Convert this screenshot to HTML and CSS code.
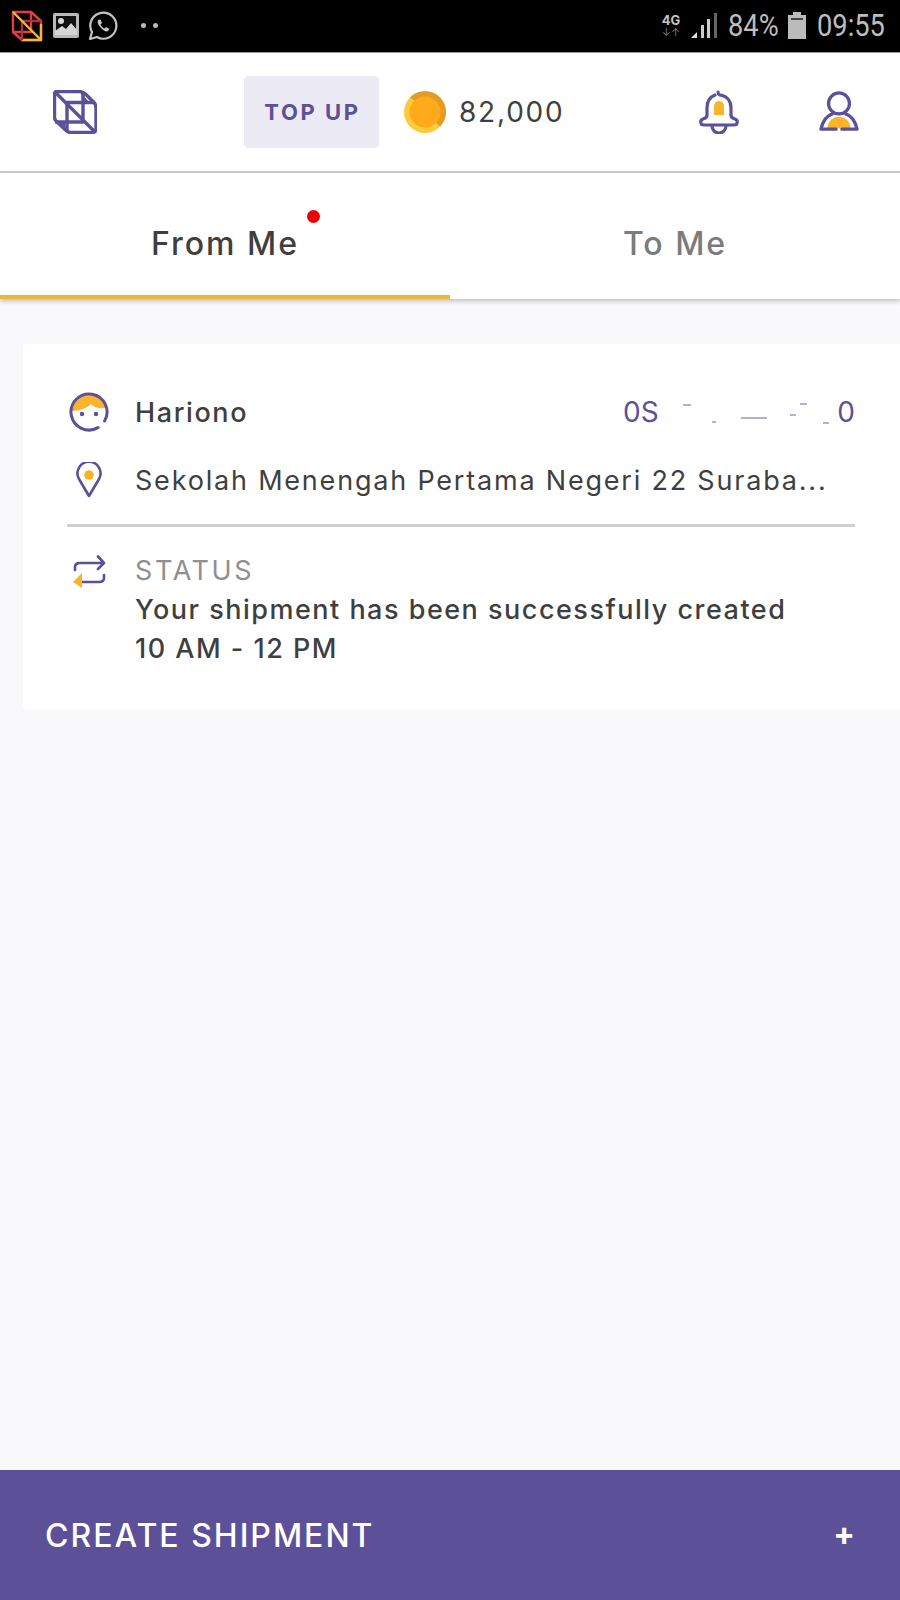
FILE: index.html
```html
<!DOCTYPE html>
<html lang="en">
<head>
  <meta charset="UTF-8" />
  <meta name="viewport" content="width=device-width, initial-scale=1.0"/>
  <title>Shipments</title>
  <link rel="stylesheet" href="styles.css">
</head>
<body>
  <div class="page">
    <!-- Status bar -->
    <div class="status-bar">
      <div class="status-left">
        <svg class="st-logo" width="34" height="32" viewBox="0 0 34 32" fill="none" stroke-width="2.4" stroke-linejoin="round">
          <path d="M3 2H21V22H3Z" stroke="#e23d4b"/>
          <path d="M21 2L31 11V30H12L3 22" stroke="#e23d4b"/>
          <path d="M31 14V30H12" stroke="#f2b63a"/>
          <path d="M12 11H31M12 11V30" stroke="#b0303c"/>
          <path d="M3 2L31 30" stroke="#f2b63a"/>
        </svg>
        <svg width="28" height="26" viewBox="0 0 28 26">
          <rect x="1" y="0" width="26" height="25" rx="2" fill="#b9b9b9"/>
          <rect x="4" y="3" width="20" height="15" fill="#111"/>
          <circle cx="9" cy="8" r="3" fill="#d6d6d6"/>
          <path d="M3 22V18L10 13L14 16L19 10L25 17V22Z" fill="#d6d6d6"/>
        </svg>
        <svg width="30" height="30" viewBox="0 0 30 30" fill="none">
          <path d="M2 28L4 21A13 13 0 1 1 9 26Z" stroke="#c4c4c4" stroke-width="2.2" stroke-linejoin="round"/>
          <path d="M10 9C9 11 10 14 13 17S18 21 20 20L21.500 18L18 16L16.500 17.500C15 17 13 15 12.500 13.500L14 12L12.500 8.500Z" fill="#c4c4c4"/>
        </svg>
        <div class="st-dots"><span></span><span></span></div>
      </div>
      <div class="status-right">
        <div class="st-net"><b>4G</b><small>↓↑</small></div>
        <svg class="st-signal" width="26" height="28" viewBox="0 0 26 28">
          <path d="M0 26L6 20V26Z" fill="#ddd"/>
          <rect x="10" y="13" width="3" height="13" fill="#ccc"/>
          <rect x="16" y="7" width="3" height="19" fill="#ccc"/>
          <rect x="23" y="1" width="3" height="25" fill="#666"/>
        </svg>
        <span class="st-text st-pct"><span>84%</span></span>
        <svg class="st-battery" width="18" height="28" viewBox="0 0 18 28">
          <path d="M5 0H13V3H18V27H0V3H5Z" fill="#bbb"/>
          <rect x="3" y="6" width="12" height="2" fill="#444"/>
        </svg>
        <span class="st-text st-time"><span>09:55</span></span>
      </div>
    </div>

    <!-- Header -->
    <header class="top-bar">
      <svg class="logo" width="44" height="44" viewBox="0 0 44 44" fill="none" stroke="#5c5099" stroke-width="3.4" stroke-linejoin="round">
        <path d="M3 1.500H26Q30 1.500 33 4.500L41 12.500Q43 14.500 43 18V39Q43 42.500 39 42.500H18Q15 42.500 12 39.500L3 31Q1.500 29 1.500 27V3Z"/>
        <path d="M30 3V32H2"/>
        <path d="M14 42V12.500H42"/>
        <path d="M2 2L42 42"/>
        <path d="M28 3L36 12H30Z M3 32H12L13 40Z" fill="#5c5099" stroke="none"/>
      </svg>
      <button class="topup-btn">TOP UP</button>
      <svg class="coin" width="42" height="42" viewBox="0 0 42 42">
        <circle cx="21" cy="21" r="21" fill="#fcca3d"/>
        <path d="M6 6.500A21 21 0 0 1 42 21A21 21 0 0 1 36 35.500L31 31A15 15 0 0 0 11 10Z" fill="#e49a26"/>
        <circle cx="21" cy="21" r="15.500" fill="#fdab1b"/>
      </svg>
      <span class="balance">82,000</span>
      <svg class="bell" width="40" height="44" viewBox="0 0 40 44" fill="none" stroke="#5c5099" stroke-width="3.2" stroke-linecap="round" stroke-linejoin="round">
        <path d="M15 17Q15 11 20 11Q25 11 25 17V25H15Z" fill="#fbb32a" stroke="none"/>
        <path d="M19 2Q19 4 21 5C28 6 32 11 32 18V25Q32 28 36 29Q39 30 38 33Q38 35 35 35H5Q2 35 2 33Q1 30 4 29Q8 28 8 25V18C8 11 11 7 16 5"/>
        <path d="M13 36A7 7 0 0 0 27 36"/>
      </svg>
      <svg class="person" width="40" height="42" viewBox="0 0 42 44" fill="none" stroke="#5c5099" stroke-width="3.4" stroke-linecap="round" stroke-linejoin="round">
        <path d="M9 39A12 12 0 0 1 33 39Z" fill="#fbb32a" stroke="none"/>
        <circle cx="21" cy="13" r="11"/>
        <path d="M14 24Q5 27 2 40H18M28 24Q37 27 40 40H24"/>
      </svg>
    </header>

    <!-- Tabs -->
    <nav class="tabs">
      <div class="tab active"><span class="tab-label">From Me<i class="tab-dot"></i></span></div>
      <div class="tab"><span class="tab-label">To Me</span></div>
    </nav>

    <!-- Shipment list -->
    <main class="list">
      <section class="card">
        <div class="row row-name">
          <svg class="row-icon" width="40" height="44" viewBox="0 0 40 44" fill="none">
            <path d="M2.500 21A18 18 0 0 1 37.500 17.500Q28 20 22 14Q15 21 2.500 21Z" fill="#fbb32a"/>
            <path d="M29 37.600A18 18 0 1 1 35.600 31" stroke="#5c5099" stroke-width="3" stroke-linecap="round"/>
            <circle cx="13" cy="24" r="2.200" fill="#5c5099"/>
            <circle cx="27" cy="24" r="2.200" fill="#5c5099"/>
          </svg>
          <span class="name">Hariono</span>
          <div class="phone">
            <span>0S</span>
            <i class="smudge s1"></i><i class="smudge s2"></i><i class="smudge s3"></i>
            <i class="smudge s4"></i><i class="smudge s5"></i><i class="smudge s6"></i>
            <span>0</span>
          </div>
        </div>
        <div class="row row-addr">
          <svg class="row-icon" width="40" height="36" viewBox="0 0 40 36" fill="none">
            <path d="M20 34L10 17A11.500 11.500 0 1 1 30 17Z" stroke="#5c5099" stroke-width="2.600" stroke-linejoin="round"/>
            <circle cx="20" cy="13" r="4.800" fill="#fbb32a"/>
          </svg>
          <span class="addr">Sekolah Menengah Pertama Negeri 22 Suraba...</span>
        </div>
        <div class="divider"></div>
        <div class="row row-status">
          <svg class="row-icon status-icon" width="40" height="36" viewBox="0 0 40 36" fill="none" stroke="#5c5099" stroke-width="2.600" stroke-linecap="round" stroke-linejoin="round">
            <path d="M6 15V12Q6 8 11 8H35M29 1.500L35 8L29 14"/>
            <path d="M35 20V23Q35 27 30 27H12"/>
            <path d="M13 18V33L4 27Z" fill="#fbb32a" stroke="none"/>
          </svg>
          <div class="status-text">
            <div class="status-label">STATUS</div>
            <div class="status-msg">Your shipment has been successfully created</div>
            <div class="status-msg">10 AM - 12 PM</div>
          </div>
        </div>
      </section>
    </main>

    <footer class="create-bar">
      <span>CREATE SHIPMENT</span>
      <span class="plus">+</span>
    </footer>
  </div>
</body>
</html>
```

FILE: styles.css
```css
* {
  box-sizing: border-box;
}
body {
  margin: 0;
  font-family: Inter, Lato, sans-serif;
  color: #3f3f3f;
  background-color: #f9f9fc;
}
.page {
  display: flex;
  flex-direction: column;
  height: 1600px;
  overflow: hidden;
}
.status-bar {
  display: flex;
  justify-content: space-between;
  align-items: center;
  height: 53px;
  padding: 0 15px 1px 10px;
  background-color: #000;
  border-bottom: 1px solid #999;
}
.status-left {
  display: flex;
  align-items: center;
  gap: 8px;
}
.st-dots {
  display: flex;
  gap: 7px;
  margin-left: 15px;
}
.st-dots span {
  width: 5px;
  height: 5px;
  border-radius: 50%;
  background-color: #bbb;
}
.status-right {
  display: flex;
  align-items: center;
}
.st-net {
  display: flex;
  flex-direction: column;
  align-items: center;
  width: 22px;
  color: #c4c4c4;
  line-height: 12px;
}
.st-net b {
  font-size: 13px;
}
.st-net small {
  font-size: 11px;
  color: #777;
}
.st-signal {
  margin-left: 9px;
}
.st-text {
  display: block;
  font-family: Roboto, sans-serif;
  font-size: 31px;
  color: #bdbdbd;
  white-space: nowrap;
}
.st-text span {
  display: inline-block;
  transform: scaleX(0.88);
  transform-origin: left center;
}
.st-pct {
  width: 50px;
  margin-left: 11px;
}
.st-battery {
  margin-left: 10px;
}
.st-time {
  width: 68px;
  margin-left: 11px;
}
.top-bar {
  display: flex;
  align-items: center;
  height: 120px;
  background-color: #fff;
  border-bottom: 2px solid #cfcfcf;
}
.logo {
  margin-left: 53px;
}
.topup-btn {
  width: 135px;
  height: 72px;
  margin-left: 147px;
  padding: 0 0 0 2px;
  border: none;
  border-radius: 4px;
  background-color: #eceaf4;
  color: #5c5099;
  font-family: inherit;
  font-size: 22px;
  font-weight: 700;
  letter-spacing: 2.6px;
}
.coin {
  margin-left: 25px;
}
.balance {
  margin-left: 13px;
  font-size: 28px;
  letter-spacing: 1.8px;
}
.bell {
  margin-left: auto;
}
.person {
  margin-left: 80px;
  margin-right: 41px;
}
.tabs {
  display: flex;
  height: 126px;
  background-color: #fff;
  box-shadow: 0 2px 5px rgba(0, 0, 0, 0.25);
}
.tab {
  flex: 1;
  display: flex;
  justify-content: center;
  align-items: center;
  padding-top: 14px;
  font-size: 32px;
  letter-spacing: 2px;
  color: #7b7b7b;
  font-weight: 500;
}
.tab.active {
  color: #3f3f3f;
  border-bottom: 4px solid #ecb92c;
  padding-top: 18px;
}
.tab-label {
  position: relative;
}
.tab-dot {
  position: absolute;
  top: -14px;
  right: -21px;
  width: 13px;
  height: 13px;
  border-radius: 50%;
  background-color: #f00000;
}
.list {
  flex: 1;
  padding: 45px 0 0 23px;
}
.card {
  height: 365px;
  padding: 43px 45px 0 44px;
  background-color: #fff;
}
.row {
  display: flex;
  align-items: center;
}
.row-icon {
  flex: none;
  margin-left: 2px;
  margin-right: 26px;
}
.row-name {
  height: 50px;
}
.name {
  font-size: 27px;
  font-weight: 500;
  letter-spacing: 1.6px;
}
.phone {
  position: relative;
  display: flex;
  justify-content: space-between;
  width: 232px;
  margin-left: auto;
  font-size: 28px;
  color: #5c5099;
}
.smudge {
  position: absolute;
  height: 2px;
  background-color: #5c5099;
  opacity: 0.45;
}
.s1 { left: 60px; top: 9px; width: 8px; }
.s2 { left: 89px; top: 26px; width: 4px; }
.s3 { left: 118px; top: 22px; width: 26px; }
.s4 { left: 167px; top: 19px; width: 6px; }
.s5 { left: 177px; top: 8px; width: 7px; }
.s6 { left: 200px; top: 27px; width: 6px; }
.row-addr {
  height: 36px;
  margin-top: 25px;
}
.addr {
  font-size: 27px;
  letter-spacing: 1.8px;
  white-space: nowrap;
}
.divider {
  height: 3px;
  margin-top: 26px;
  background-color: #cfcfcf;
}
.row-status {
  align-items: flex-start;
  margin-top: 24px;
}
.status-icon {
  margin-top: 4px;
}
.status-text {
  line-height: 39px;
  font-size: 27px;
}
.status-label {
  color: #8f8f8f;
  letter-spacing: 2.6px;
}
.status-msg {
  font-weight: 500;
  letter-spacing: 1.5px;
}
.create-bar {
  display: flex;
  justify-content: space-between;
  align-items: center;
  height: 130px;
  padding: 0 45px 0 45px;
  background-color: #5c5099;
  color: #fff;
  font-size: 32px;
  font-weight: 500;
  letter-spacing: 2px;
}
.plus {
  margin-bottom: 4px;
  font-size: 32px;
  font-weight: 700;
  letter-spacing: 0;
}
```
